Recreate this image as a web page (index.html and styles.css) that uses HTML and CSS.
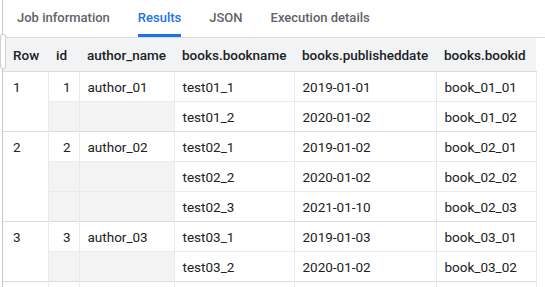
FILE: index.html
```html
<!DOCTYPE html>
<html>
<head>
<meta charset="utf-8">
<link rel="stylesheet" href="styles.css">
</head>
<body>
<div class="panel">
  <div class="handle"></div>
  <nav class="tabs">
    <span class="tab">Job information</span>
    <span class="tab active">Results</span>
    <span class="tab">JSON</span>
    <span class="tab">Execution details</span>
  </nav>
  <table class="grid">
    <colgroup>
      <col class="c-row"><col class="c-id"><col class="c-author"><col class="c-name"><col class="c-date"><col class="c-bid">
    </colgroup>
    <thead>
      <tr><th>Row</th><th>id</th><th>author_name</th><th>books.bookname</th><th>books.publisheddate</th><th>books.bookid</th></tr>
    </thead>
    <tbody>
      <tr class="first"><td rowspan="2" class="rownum">1</td><td class="num">1</td><td>author_01</td><td>test01_1</td><td>2019-01-01</td><td>book_01_01</td></tr>
      <tr class="sub"><td class="empty"></td><td class="empty"></td><td>test01_2</td><td>2020-01-02</td><td>book_01_02</td></tr>
      <tr class="first"><td rowspan="3" class="rownum">2</td><td class="num">2</td><td>author_02</td><td>test02_1</td><td>2019-01-02</td><td>book_02_01</td></tr>
      <tr class="sub"><td class="empty"></td><td class="empty"></td><td>test02_2</td><td>2020-01-02</td><td>book_02_02</td></tr>
      <tr class="sub"><td class="empty"></td><td class="empty"></td><td>test02_3</td><td>2021-01-10</td><td>book_02_03</td></tr>
      <tr class="first"><td rowspan="2" class="rownum">3</td><td class="num">3</td><td>author_03</td><td>test03_1</td><td>2019-01-03</td><td>book_03_01</td></tr>
      <tr class="sub"><td class="empty"></td><td class="empty"></td><td>test03_2</td><td>2020-01-02</td><td>book_03_02</td></tr>
      <tr class="first"><td class="rownum"></td><td class="num"></td><td></td><td></td><td></td><td></td></tr>
    </tbody>
  </table>
</div>
</body>
</html>
```
FILE: styles.css
```css
html, body {
  margin: 0;
  padding: 0;
  background: #fff;
}
body {
  font-family: Roboto, "Liberation Sans", sans-serif;
  color: #202124;
  font-size: 13.5px;
  overflow: hidden;
}
.panel {
  position: relative;
  margin-left: 2px;
  border-left: 1px solid #c8c8c8;
  height: 287px;
}
.handle {
  position: absolute;
  left: -3px;
  top: 34px;
  width: 6px;
  height: 35px;
  box-sizing: border-box;
  background: #fff;
  border: 1px solid #d0d0d0;
  border-radius: 2px;
}
.tabs {
  display: flex;
  height: 37px;
  border-bottom: 1px solid #dadce0;
}
.tab {
  position: relative;
  padding: 0 14px;
  line-height: 36px;
  font-size: 13px;
  font-weight: 500;
  color: #5f6368;
}
.tab.active {
  color: #1a73e8;
}
.tab.active::after {
  content: "";
  position: absolute;
  left: 14px;
  right: 14px;
  bottom: 0;
  height: 3px;
  background: #1a73e8;
}
.grid {
  border-collapse: collapse;
  table-layout: fixed;
  width: 533px;
}
.c-row { width: 45px; }
.c-id { width: 31px; }
.c-author { width: 95px; }
.c-name { width: 120px; }
.c-date { width: 142px; }
.c-bid { width: 100px; }
.grid th {
  background: #f1f3f4;
  height: 33px;
  padding: 0 8px 0 8px;
  text-align: left;
  font-weight: 500;
  color: #202124;
  border-bottom: 1px solid #dadce0;
  white-space: nowrap;
}
.grid th:first-child { padding-left: 10px; }
.grid td {
  height: 29px;
  padding: 0 8px;
  border-left: 1px solid #e8eaed;
  border-right: 1px solid #e8eaed;
  white-space: nowrap;
  vertical-align: middle;
}
.grid td.rownum {
  border-left: none;
  padding-left: 10px;
  vertical-align: top;
  line-height: 30px;
}
.grid td.num { text-align: right; }
.grid td.empty { background: #f3f3f3; }
.grid tr.first td { border-top: 1px solid #dadce0; }
.grid tr.sub td { border-top: 1px solid #e8eaed; }
```
